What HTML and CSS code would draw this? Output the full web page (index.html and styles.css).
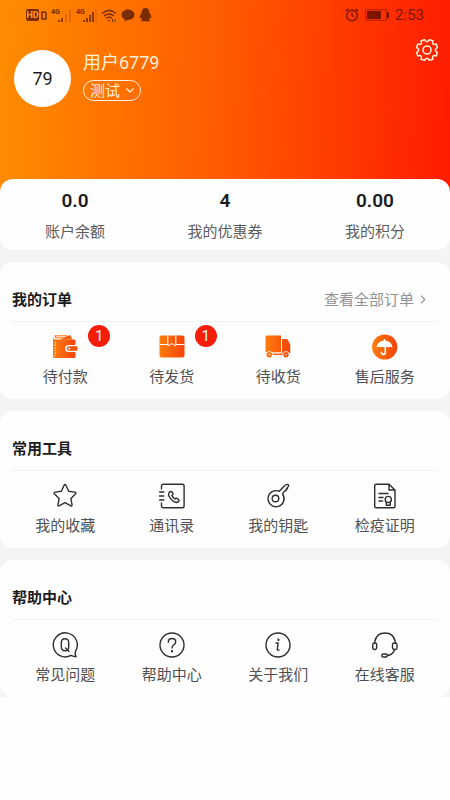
FILE: index.html
```html
<!DOCTYPE html>
<html lang="zh-CN">
<head>
<meta charset="utf-8">
<meta name="viewport" content="width=device-width, initial-scale=1">
<title>我的</title>
<link rel="stylesheet" href="styles.css">
</head>
<body>
<svg class="defs" aria-hidden="true">
  <defs>
    <linearGradient id="warm" x1="0" y1="0" x2="1" y2="0">
      <stop offset="0" stop-color="#ff7d0c"/>
      <stop offset="1" stop-color="#f5430a"/>
    </linearGradient>
  </defs>
</svg>
<header class="hero">
  <div class="status">
    <div class="status-group">
      <span class="hd">HD</span>
      <svg width="6" height="10" viewBox="0 0 6 10"><path d="M1 2h3l1 1v6H1z" fill="none" stroke="currentColor" stroke-width="1.6"/></svg>
      <span class="signal"><small>4G</small><svg width="14" height="13" viewBox="0 0 14 13"><path d="M1 11v2M4 9v4" stroke="currentColor" stroke-width="1.6"/><path d="M8 5v8M12 1v12" stroke="currentColor" stroke-width="1.6" opacity=".3"/></svg></span>
      <span class="signal"><small>4G</small><svg width="14" height="13" viewBox="0 0 14 13"><path d="M1 11v2M4 9v4M7 6v7M10 3v10" stroke="currentColor" stroke-width="1.7"/><path d="M13 0v13" stroke="currentColor" opacity=".3"/></svg></span>
      <svg width="16" height="13" viewBox="0 0 16 13" fill="none" stroke="currentColor" stroke-width="1.3"><path d="M1 4.5Q8-1.5 15 4.5M3 7q5-4 10 0M5 9.3q3-2.3 6 0"/><circle cx="8" cy="11.4" r=".9" fill="currentColor" stroke="none"/><path d="M11.5 10v3M14 10v3" stroke-width="1"/></svg>
      <svg width="14" height="13" viewBox="0 0 14 13"><path d="M7 .5C3.300.5.500 2.800.500 5.700c0 2 1.300 3.700 3.300 4.600L3.500 12.800l3-1.900H7c3.600 0 6.500-2.300 6.500-5.200S10.600.5 7 .5z" fill="currentColor"/></svg>
      <svg width="13" height="14" viewBox="0 0 13 14"><path d="M6.500 0C4 0 2.700 2 2.700 4.500 1.500 6.500.5 8 .7 10c.3.700.9.200 1.300-.5.200.8.600 1.500 1.100 2-.9.300-1.300.7-1.200 1.200.4 1 3.500.6 4.600.2 1.100.4 4.200.8 4.600-.2.100-.500-.3-.9-1.200-1.200.5-.500.900-1.200 1.100-2 .4.700 1 1.200 1.300.5.200-2-.8-3.500-2-5.500C10.300 2 9 0 6.500 0z" fill="currentColor"/></svg>
    </div>
    <div class="status-group right">
      <svg width="14" height="14" viewBox="0 0 14 14" fill="none" stroke="currentColor" stroke-width="1.4"><circle cx="7" cy="7.500" r="5.300"/><path d="M7 4.500v3l2 1.500M.8 3 3.300.9M13.200 3 10.700.9"/></svg>
      <svg width="24" height="12" viewBox="0 0 24 12"><rect x=".7" y=".7" width="20.600" height="10.600" fill="none" stroke="currentColor" stroke-width="1" opacity=".6"/><path d="M2 2h14v8H2zM22 3h2v6h-2z" fill="currentColor"/></svg>
      <time>2:53</time>
    </div>
  </div>
  <div class="profile">
    <div class="avatar">79</div>
    <div class="who">
      <h1>用户6779</h1>
      <button class="role" type="button">测试<svg width="8" height="5" viewBox="0 0 8 5" fill="none" stroke="currentColor" stroke-width="1.300"><path d="M.5.5 4 4 7.500.5"/></svg></button>
    </div>
    <button class="gear" type="button" aria-label="设置">
      <svg width="24" height="24" viewBox="0 0 24 24" fill="none" stroke="currentColor" stroke-width="1.600" stroke-linejoin="round"><circle cx="12" cy="12" r="4"/><path d="M22.300 14.400 21.300 17.900Q16.400 16.400 17.900 21.300L14.400 22.300Q12 18.200 9.600 22.300L6.100 21.300Q7.600 16.400 2.700 17.900L1.700 14.400Q5.800 12 1.700 9.600L2.700 6.100Q7.600 7.600 6.100 2.700L9.600 1.700Q12 5.800 14.400 1.700L17.900 2.700Q16.400 7.600 21.300 6.100L22.300 9.600Q18.200 12 22.300 14.400Z"/></svg>
    </button>
  </div>
</header>

<main>
  <section class="card stats">
    <a href="#balance"><strong>0.0</strong><span>账户余额</span></a>
    <a href="#coupons"><strong>4</strong><span>我的优惠券</span></a>
    <a href="#points"><strong>0.00</strong><span>我的积分</span></a>
  </section>

  <section class="card">
    <div class="head">
      <h2>我的订单</h2>
      <a class="more" href="#orders">查看全部订单<svg width="6" height="9" viewBox="0 0 6 9" fill="none" stroke="currentColor" stroke-width="1.200"><path d="M1 .7 4.800 4.500 1 8.300"/></svg></a>
    </div>
    <nav class="grid">
      <a href="#pay">
        <span class="icon"><svg width="26" height="26" viewBox="0 0 26 26"><path d="M3 1.800h12l1 2H3.500z" fill="none" stroke="#f8700d" stroke-width="1"/><path d="M8 5.500 18 1l2.500 4.500z" fill="#f45a0a"/><path d="M1 3v19.500Q1 24 2.500 24H22q1.500 0 1.500-1.500V18h-7a3.500 3.500 0 0 1 0-7h7V7q0-1.500-1.500-1.500H3.500Q1.500 5.500 1 3z" fill="url(#warm)"/><path d="M3.300 8v14" stroke="#fff" stroke-width="1.100" stroke-dasharray="1.300 1.300"/><path d="M17 12.300h8.500v4.500H17a2.250 2.250 0 0 1 0-4.500z" fill="#f4520a"/><circle cx="17.300" cy="14.500" r="1.100" fill="#fff"/></svg><b class="badge">1</b></span>
        <span>待付款</span>
      </a>
      <a href="#ship">
        <span class="icon"><svg width="26" height="26" viewBox="0 0 26 26"><rect x="0.500" y="1.500" width="25" height="22" rx="2" fill="url(#warm)"/><path d="M.5 10.500h8M17 10.500h8.500M8.800 1.500V12l4-2.500 4 2.500V1.500" fill="none" stroke="#fff" stroke-width="1"/></svg><b class="badge">1</b></span>
        <span>待发货</span>
      </a>
      <a href="#receive">
        <span class="icon"><svg width="26" height="26" viewBox="0 0 26 26"><path d="M.5 2.500q0-1 1-1H16v16.700H.5zM17 5h4.500q1 0 1.500 1l2.300 5v8H17zM7 19.500h11v1.500H7z" fill="url(#warm)"/><circle cx="4.200" cy="20.700" r="3.500" fill="#fff"/><circle cx="21" cy="20.700" r="3.500" fill="#fff"/><circle cx="4.200" cy="20.700" r="2.700" fill="#f8700d"/><circle cx="21" cy="20.700" r="2.700" fill="#f4520a"/><circle cx="4.200" cy="20.700" r=".8" fill="#fff"/><circle cx="21" cy="20.700" r=".8" fill="#fff"/></svg></span>
        <span>待收货</span>
      </a>
      <a href="#service">
        <span class="icon"><svg width="26" height="26" viewBox="0 0 26 26"><circle cx="12.700" cy="13" r="12.600" fill="url(#warm)"/><path d="M4.500 13.500q.7-6 7.300-7V5h1.400v1.500q6.600 1 7.300 7-2-1.600-4 0-2-1.600-4 0-2-1.600-4 0-2-1.600-4 0z" fill="#fff"/><path d="M13.300 12.500v6a1.900 1.900 0 0 1-3.800 0v-.7" fill="none" stroke="#fff" stroke-width="1.600"/></svg></span>
        <span>售后服务</span>
      </a>
    </nav>
  </section>

  <section class="card">
    <div class="head"><h2>常用工具</h2></div>
    <nav class="grid">
      <a href="#favorites">
        <span class="icon"><svg class="line" width="26" height="26" viewBox="0 0 26 26"><path d="M12 2.500q1-1.900 2 0l2.700 5.800 6.100.8q2 .4.600 1.900l-4.500 4.400 1.100 6.200q.2 1.900-1.500 1.100L13 19.700l-5.500 3q-1.700.8-1.500-1.100l1.100-6.200-4.500-4.400Q1.200 9.500 3.200 9.100l6.100-.8z"/></svg></span>
        <span>我的收藏</span>
      </a>
      <a href="#contacts">
        <span class="icon"><svg class="line" width="26" height="26" viewBox="0 0 26 26"><path d="M2.500 6V3q0-1.800 1.800-1.800h19q1.800 0 1.800 1.800v20q0 1.800-1.800 1.800h-19Q2.500 24.800 2.500 23v-3M.5 9h4.300M.5 13h4.300M.5 17h4.300"/><path d="M10.300 9.200q1.700-1.500 3 0l.7 1.300q.3.900-1 1.900.8 2.300 3 3.600 1.300-1.300 2.200-.6l1.500 1.300q1 1.200-.5 2.200-2 1.500-5.500-1.200-3.300-2.900-4-5.200-.5-2 .6-3.300z"/></svg></span>
        <span>通讯录</span>
      </a>
      <a href="#keys">
        <span class="icon"><svg class="line" width="26" height="26" viewBox="0 0 26 26"><path d="M14.200 8.300 19.300 3q1.600-1.700 3.300-1.600 1 .1 1 1.100 0 1.300-1.300 2l.2 1.300-1.300.2.100 1.500-1.400.2-2.400 3.200a8 8 0 1 1-3.300-2.600z"/><circle cx="10.500" cy="15.500" r="3.300"/></svg></span>
        <span>我的钥匙</span>
      </a>
      <a href="#certificate">
        <span class="icon"><svg class="line" width="26" height="26" viewBox="0 0 26 26"><path d="M17 1.200H4.200q-1.500 0-1.500 1.500v20.600q0 1.500 1.500 1.500h17.300q1.500 0 1.500-1.500V7zM17 1.200V7H23M7 10.500h9M7 14.500h4M7 18h3.500"/><circle cx="16.300" cy="16.500" r="3.100"/><path d="M14.300 19v3.300h4V19"/></svg></span>
        <span>检疫证明</span>
      </a>
    </nav>
  </section>

  <section class="card">
    <div class="head"><h2>帮助中心</h2></div>
    <nav class="grid">
      <a href="#faq">
        <span class="icon"><svg class="line" width="26" height="26" viewBox="0 0 26 26"><path d="M23.600 19A12 12 0 1 0 19 23.400q2.500 1.400 5.200 1.400-1.700-2.300-.6-5.800z"/><path d="M13 6.700q3.700 0 3.700 4v4q0 4-3.700 4t-3.700-4v-4q0-4 3.700-4zM13.500 16l3.500 3.500"/></svg></span>
        <span>常见问题</span>
      </a>
      <a href="#help">
        <span class="icon"><svg class="line" width="26" height="26" viewBox="0 0 26 26"><circle cx="13" cy="13" r="12"/><path d="M9.300 10.200q0-3.700 3.700-3.700t3.700 3.300q0 1.700-1.900 3-1.800 1.300-1.800 3.200"/><circle cx="13" cy="19.200" r=".5"/></svg></span>
        <span>帮助中心</span>
      </a>
      <a href="#about">
        <span class="icon"><svg class="line" width="26" height="26" viewBox="0 0 26 26"><circle cx="13" cy="13" r="12"/><path d="M11 11h2.200l-1 6.300q-.1 1.200 1.800.7"/><circle cx="13.400" cy="7.800" r=".5"/></svg></span>
        <span>关于我们</span>
      </a>
      <a href="#support">
        <span class="icon"><svg class="line" width="26" height="26" viewBox="0 0 26 26"><path d="M2.700 11V9.800Q4.500 1 13 1t10.300 8.800V11M22.500 17.500q-1 5-7 6"/><rect x=".7" y="11" width="4" height="6.500" rx="1.700"/><rect x="20.500" y="11" width="4.500" height="6.500" rx="1.700"/><rect x="9.800" y="22" width="5.500" height="3" rx="1.500"/></svg></span>
        <span>在线客服</span>
      </a>
    </nav>
  </section>
</main>
</body>
</html>
```
FILE: styles.css
```css
* {
  box-sizing: border-box;
}

body {
  margin: 0;
  background: #fefefe;
  color: #1c1c1e;
  font-family: Roboto, "Noto Sans CJK SC", sans-serif;
  font-size: 15px;
  line-height: 20px;
}

h1,
h2 {
  margin: 0;
}

a {
  color: inherit;
  text-decoration: none;
}

button {
  margin: 0;
  background: none;
  color: inherit;
  font: inherit;
}

svg {
  display: block;
  flex: none;
}

.defs {
  position: absolute;
  width: 0;
  height: 0;
}

.hero {
  padding-bottom: 85px;
  background: linear-gradient(92deg, #ff8c00, #ff5a00 50%, #ff1c00);
  color: #fff0d8;
}

.status {
  display: flex;
  justify-content: space-between;
  padding: 5px 26px;
  color: #7a2c00;
}

.status-group {
  display: flex;
  align-items: center;
  gap: 4px;
}

.status-group.right {
  gap: 6px;
  color: #7c1400;
}

.status time {
  font-size: 15px;
}

.hd {
  width: 13px;
  border-radius: 2px;
  background: #7a2c00;
  color: #ff9a30;
  font-size: 9px;
  font-weight: 700;
  line-height: 12px;
  text-align: center;
}

.hd + svg {
  margin-left: -2px;
}

.signal {
  display: flex;
  align-items: flex-start;
}

.signal small {
  width: 7px;
  font-size: 7px;
  font-weight: 700;
  line-height: 6px;
}

.profile {
  display: flex;
  align-items: flex-start;
  padding: 8px 11px 0 14px;
}

.avatar {
  width: 57px;
  height: 57px;
  margin-top: 12px;
  border-radius: 50%;
  background: #fff;
  color: #1c1c1e;
  font-size: 18px;
  line-height: 57px;
  text-align: center;
}

.who {
  flex: 1;
  margin: 13px 0 0 12px;
}

.who h1 {
  font-size: 18px;
  font-weight: 400;
  line-height: 24px;
}

.role {
  display: flex;
  align-items: center;
  gap: 6px;
  height: 21px;
  margin-top: 5px;
  padding: 0 6px;
  border: 1px solid currentColor;
  border-radius: 11px;
}

.gear {
  padding: 0;
  border: 0;
}

.card {
  margin-bottom: 12px;
  padding: 0 12px;
  border-radius: 13px;
  background: #fefefe;
}

/* The first card overlaps the header, which shows behind its top corners. */
main {
  margin-top: -13px;
  background: linear-gradient(transparent 13px, #f4f3f6 13px);
}

main .card:last-child {
  margin-bottom: 0;
}

.stats {
  display: grid;
  grid-template-columns: repeat(3, 1fr);
  padding: 10px 0 8px;
}

.stats a {
  display: flex;
  flex-direction: column;
  gap: 9px;
  align-items: center;
  color: #5c5c60;
}

.stats strong {
  color: #1c1c1e;
  font-size: 19px;
  font-weight: 600;
  line-height: 24px;
}

.head {
  display: flex;
  align-items: center;
  justify-content: space-between;
  height: 60px;
  padding-top: 16px;
  border-bottom: 1px solid #f1f0f3;
}

.head h2 {
  font-size: 15px;
  font-weight: 700;
}

.more {
  display: flex;
  align-items: center;
  gap: 6px;
  padding-right: 12px;
  color: #929296;
}

.grid {
  display: grid;
  grid-template-columns: repeat(4, 1fr);
  padding: 12px 0;
}

.grid a {
  display: flex;
  flex-direction: column;
  gap: 7px;
  align-items: center;
  color: #505054;
}

.icon {
  position: relative;
}

.line {
  fill: none;
  stroke: #2e2e32;
  stroke-width: 1.4px;
  stroke-linecap: round;
  stroke-linejoin: round;
}

.badge {
  position: absolute;
  top: -9px;
  left: 36px;
  width: 22px;
  height: 22px;
  border-radius: 50%;
  background: #f41d08;
  color: #fff;
  font-size: 15px;
  font-weight: 400;
  line-height: 22px;
  text-align: center;
}
```
